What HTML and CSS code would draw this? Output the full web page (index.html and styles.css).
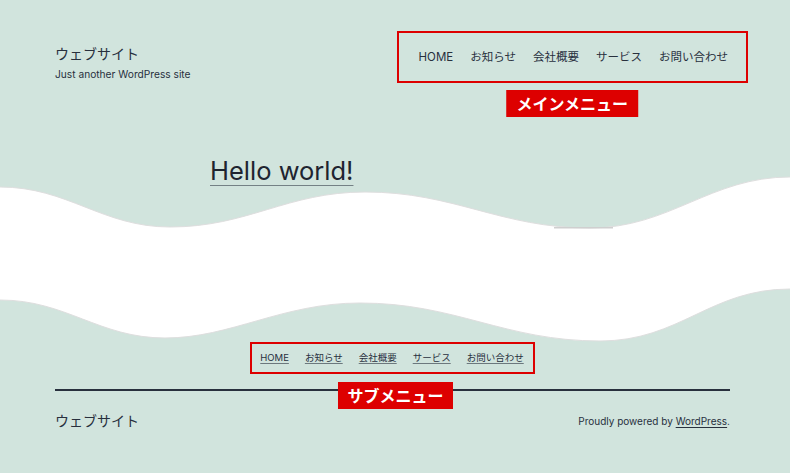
FILE: index.html
```html
<!DOCTYPE html>
<html lang="ja">
<head>
<meta charset="utf-8">
<title>ウェブサイト</title>
<link rel="stylesheet" href="styles.css">
</head>
<body>
<header class="site-header">
  <div class="branding">
    <p class="site-title">ウェブサイト</p>
    <p class="site-desc">Just another WordPress site</p>
  </div>
  <nav class="main-nav">
    <ul class="menu">
      <li>HOME</li>
      <li>お知らせ</li>
      <li>会社概要</li>
      <li>サービス</li>
      <li>お問い合わせ</li>
    </ul>
    <span class="tag tag-main">メインメニュー</span>
  </nav>
</header>
<main class="site-main">
  <h1 class="entry-title"><a href="#">Hello world!</a></h1>
  <svg class="wave" viewBox="0 0 790 167" width="790" height="167" preserveAspectRatio="none" aria-hidden="true">
    <path d="M0,12 C68,12 102,52 170,52 C248,52 287,17 365,17 C455,17 500,53 590,53 C670,53 710,2 790,2 L790,114 C710,114 680,166 600,166 C504,166 456,128 360,128 C282,128 231,163 165,163 C99,163 66,125 0,125 Z" fill="#ffffff"/>
    <path d="M0,12 C68,12 102,52 170,52 C248,52 287,17 365,17 C455,17 500,53 590,53 C670,53 710,2 790,2" fill="none" stroke="#dedede" stroke-width="1"/>
    <path d="M790,114 C710,114 680,166 600,166 C504,166 456,128 360,128 C282,128 231,163 165,163 C99,163 66,125 0,125" fill="none" stroke="#dedede" stroke-width="1"/>
    <rect x="554" y="52" width="59" height="1.5" fill="#cfcfcf"/>
  </svg>
</main>
<footer class="site-footer">
  <div class="sub-nav-wrap">
    <nav class="sub-nav">
      <ul class="sub-menu">
        <li><a href="#">HOME</a></li>
        <li><a href="#">お知らせ</a></li>
        <li><a href="#">会社概要</a></li>
        <li><a href="#">サービス</a></li>
        <li><a href="#">お問い合わせ</a></li>
      </ul>
      <span class="tag tag-sub">サブメニュー</span>
    </nav>
  </div>
  <div class="footer-line"></div>
  <div class="footer-bar">
    <span class="footer-title">ウェブサイト</span>
    <span class="powered">Proudly powered by <a href="#">WordPress</a>.</span>
  </div>
</footer>
</body>
</html>
```
FILE: styles.css
```css
html, body {
  margin: 0;
  padding: 0;
}
body {
  width: 790px;
  min-height: 473px;
  overflow: hidden;
  background: #d1e4dd;
  color: #28303d;
  font-family: "Inter", "Noto Sans CJK JP", sans-serif;
}
a {
  color: inherit;
}

/* header */
.site-header {
  display: flex;
  justify-content: space-between;
  align-items: flex-start;
  padding: 31px 42px 0 55px;
}
.branding {
  padding-top: 13px;
}
.site-title {
  margin: 0;
  font-size: 14px;
  line-height: 20px;
}
.site-desc {
  margin: 2px 0 0;
  font-size: 10.2px;
  line-height: 16px;
}
.main-nav {
  position: relative;
  border: 2px solid #dd0000;
  height: 48px;
  padding: 0 18px 0 20px;
  display: flex;
  align-items: center;
}
.menu {
  list-style: none;
  margin: 0;
  padding: 0;
  display: flex;
  gap: 17px;
  font-size: 11.5px;
  line-height: 48px;
}

/* annotation labels */
.tag {
  position: absolute;
  left: 50%;
  transform: translateX(-50%);
  background: #dd0000;
  color: #ffffff;
  font-family: "Noto Sans CJK JP", sans-serif;
  font-weight: 700;
  font-size: 16px;
  line-height: 27px;
  padding: 0 10px;
  white-space: nowrap;
}
.tag-main {
  top: calc(100% + 9px);
}
.tag-sub {
  top: calc(100% + 10px);
  left: calc(50% + 3px);
  padding: 0 9px;
}

/* main */
.entry-title {
  margin: 73px 0 0 210px;
  font-size: 25.5px;
  font-weight: 400;
  line-height: 30px;
  color: #1e2430;
}
.entry-title a {
  text-decoration: underline;
  text-decoration-thickness: 1px;
  text-decoration-color: rgba(40, 48, 61, 0.55);
  text-underline-offset: 5px;
}
.wave {
  display: block;
  margin-top: -11px;
}

/* footer */
.site-footer {
  padding: 0 60px 0 55px;
}
.sub-nav-wrap {
  display: flex;
  justify-content: center;
}
.sub-nav {
  position: relative;
  border: 2px solid #dd0000;
  height: 28px;
  padding: 0 9px 0 8px;
}
.sub-menu {
  list-style: none;
  margin: 0;
  padding: 0;
  display: flex;
  gap: 16px;
  font-size: 9.5px;
  line-height: 28px;
}
.sub-menu a {
  text-decoration: underline;
  text-decoration-thickness: 1px;
  text-decoration-color: rgba(40, 48, 61, 0.6);
  text-underline-offset: 2px;
}
.footer-line {
  margin-top: 15px;
  border-top: 2px solid #28303d;
}
.footer-bar {
  display: flex;
  justify-content: space-between;
  align-items: center;
  margin-top: 20px;
  line-height: 20px;
}
.footer-title {
  font-size: 14px;
}
.powered {
  font-size: 10px;
}
.powered a {
  text-decoration: underline;
  text-decoration-thickness: 1px;
  text-underline-offset: 2px;
}
```
